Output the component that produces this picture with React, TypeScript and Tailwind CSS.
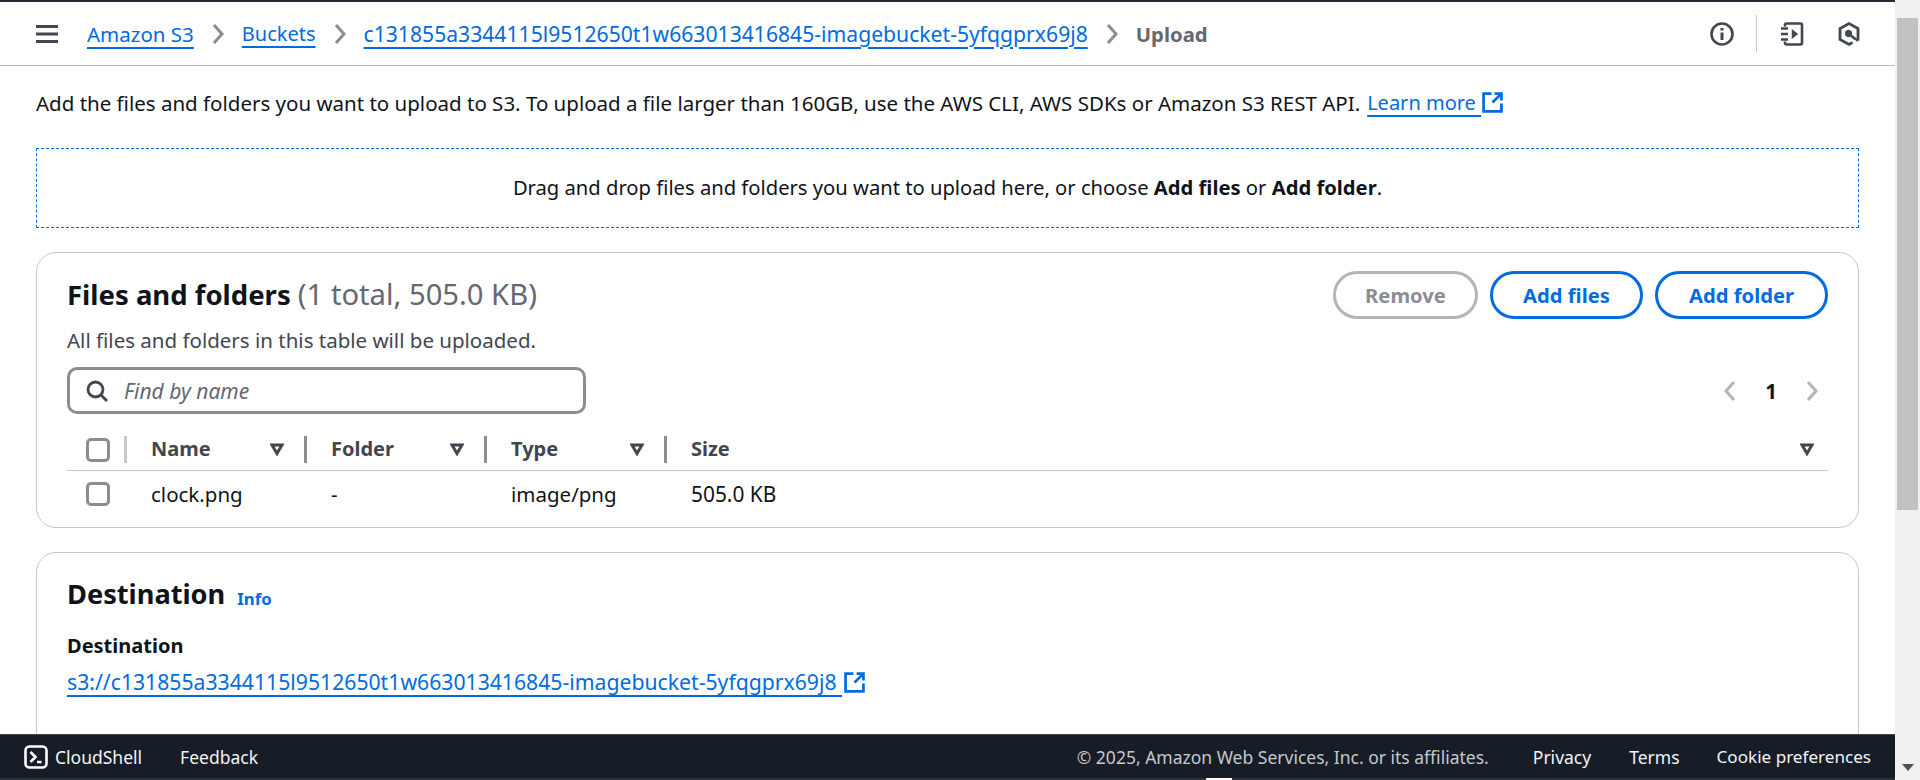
import React from "react";

const Ext = ({ className = "" }: { className?: string }) => (
  <svg viewBox="0 0 20 20" className={"w-[21px] h-[21px] " + className} fill="none" stroke="#006ce0" strokeWidth="2.6">
    <path d="M9 1.5H1.5v17h17V11" />
    <path d="M12 1.5h6.5V8M18 2l-8 8" />
  </svg>
);

const Chevron = ({ color = "#8c8c94", dir = "r" }: { color?: string; dir?: string }) => (
  <svg viewBox="0 0 12 20" className="w-[12px] h-[20px]" fill="none" stroke={color} strokeWidth="3">
    <path d={dir === "r" ? "M2 1l8 9-8 9" : "M10 1l-8 9 8 9"} />
  </svg>
);

const Caret = () => (
  <svg viewBox="0 0 14 13" className="w-[14px] h-[13px]" fill="none" stroke="#424650" strokeWidth="3">
    <path d="M2 2h10l-5 8.5z" />
  </svg>
);

const Check = () => <div className="w-[24px] h-[24px] rounded-[5px] border-[3px] border-[#8c8c94] bg-white" />;

const Crumb = ({ children, size }: { children: React.ReactNode; size: string }) => (
  <a className={"text-[#006ce0] underline underline-offset-[5px] decoration-2 whitespace-nowrap " + size}>{children}</a>
);

const Btn = ({ children, w, off }: { children: React.ReactNode; w: string; off?: boolean }) => (
  <div
    className={
      "h-[48px] rounded-full border-[3px] flex items-center justify-center font-bold text-[20.2px] " +
      w +
      (off ? " border-[#b4b4bb] text-[#8c8c94]" : " border-[#006ce0] text-[#006ce0]")
    }
  >
    {children}
  </div>
);

const Th = ({ label, w, last }: { label: string; w: string; last?: boolean }) => (
  <div className={"flex items-center h-[27px] font-bold text-[20px] text-[#424650] " + w}>
    <span className="pl-[24px] mb-[2px]">{label}</span>
    <span className={"ml-auto " + (last ? "mr-[14px]" : "mr-[20px]")}>
      <Caret />
    </span>
    {!last && <span className="w-[3px] h-[27px] bg-[#8c8c94]" />}
  </div>
);

export default function App() {
  return (
    <div className="h-[780px] w-[1920px] overflow-hidden flex bg-white text-[20.5px] leading-[24px] text-[#0f141a] font-['Noto_Sans',sans-serif]">
      <div className="w-[1895px] flex flex-col h-full">
        <div className="h-[2px] bg-[#232b37] shrink-0" />
        <header className="h-[64px] shrink-0 border-b border-[#b4b4bb] flex items-center pl-[36px] pr-[34px]">
          <svg viewBox="0 0 22 18" className="w-[22px] h-[18px] mr-[29px]" fill="#424650">
            <rect width="22" height="3" y="0" />
            <rect width="22" height="3" y="7.5" />
            <rect width="22" height="3" y="15" />
          </svg>
          <Crumb size="text-[20.5px]">Amazon S3</Crumb>
          <span className="mx-[18px] flex"><Chevron /></span>
          <Crumb size="text-[20px]">Buckets</Crumb>
          <span className="mx-[18px] flex"><Chevron /></span>
          <Crumb size="text-[21.15px]">c131855a3344115l9512650t1w663013416845-imagebucket-5yfqgprx69j8</Crumb>
          <span className="mx-[18px] flex"><Chevron /></span>
          <span className="font-bold text-[20.3px] text-[#656871]">Upload</span>
          <div className="ml-auto flex items-center">
            <svg viewBox="0 0 24 24" className="w-[24px] h-[24px]" fill="none" stroke="#424650" strokeWidth="2.6">
              <circle cx="12" cy="12" r="10.5" />
              <path d="M12 10.5V18M12 6v2.6" strokeWidth="3" />
            </svg>
            <span className="w-px h-[37px] bg-[#c6c6cd] ml-[22px] mr-[23px]" />
            <svg viewBox="0 0 24 24" className="w-[24px] h-[24px]" fill="none" stroke="#424650" strokeWidth="2.6">
              <path d="M5 4.5V3a1.5 1.5 0 0 1 1.5-1.5h14A1.5 1.5 0 0 1 22 3v18a1.5 1.5 0 0 1-1.5 1.5h-14A1.5 1.5 0 0 1 5 21v-1.5" />
              <path d="M1 6.5h7M1 12h7M1 17.5h7" />
              <path d="M12.5 8.5v7l4.5-3.5z" fill="#424650" strokeWidth="1.5" />
            </svg>
            <svg viewBox="0 0 24 24" className="w-[24px] h-[24px] ml-[33px]" fill="none" stroke="#424650" strokeWidth="2.8">
              <path d="M15.5 20.5L12 22.4 3 17.4V6.6l9-5 9 5v10.8l-2 1.1" />
              <circle cx="11.5" cy="11.5" r="3.2" fill="#424650" strokeWidth="1" />
              <path d="M12.5 12.5l6.5 5" />
            </svg>
          </div>
        </header>

        <main className="flex-1 min-h-0 overflow-hidden pl-[36px] pr-[36px]">
          <div className="h-[74px] flex items-center whitespace-nowrap">
            <span>Add the files and folders you want to upload to S3. To upload a file larger than 160GB, use the AWS CLI, AWS SDKs or Amazon S3 REST API.</span>
            <a className="ml-[7px] text-[20px] text-[#006ce0] underline underline-offset-[5px] decoration-2">Learn more&nbsp;</a>
            <Ext className="-mt-[1px] ml-[1px]" />
          </div>
          <div className="mt-[8px] h-[80px] pb-[2px] border border-dashed border-[#006ce0] flex items-center justify-center text-[20.2px]">
            <span>
              Drag and drop files and folders you want to upload here, or choose <b>Add files</b> or <b>Add folder</b>.
            </span>
          </div>

          <section className="mt-[24px] h-[276px] rounded-[20px] border border-[#c6c6cd] px-[30px] pt-[18px]">
            <div className="flex items-start justify-between h-[48px]">
              <div>
                <div className="text-[27.5px] font-bold leading-[34px] mt-[6px] whitespace-nowrap">
                  Files and folders <span className="font-normal text-[29.2px] text-[#656871]">(1 total, 505.0 KB)</span>
                </div>
                <div className="mt-[16px] text-[#424650] whitespace-nowrap">All files and folders in this table will be uploaded.</div>
              </div>
              <div className="flex gap-[12px]">
                <Btn w="w-[145px]" off>Remove</Btn>
                <Btn w="w-[153px]">Add files</Btn>
                <Btn w="w-[173px]">Add folder</Btn>
              </div>
            </div>
            <div className="mt-[48px] flex items-center justify-between">
              <div className="w-[519px] h-[47px] rounded-[10px] border-[3px] border-[#8c8c94] flex items-center pl-[16px]">
                <svg viewBox="0 0 22 22" className="w-[22px] h-[22px]" fill="none" stroke="#424650" strokeWidth="2.8">
                  <circle cx="9.5" cy="9.5" r="7.5" />
                  <path d="M15 15l6 6" />
                </svg>
                <span className="ml-[16px] italic text-[21px] text-[#656871]">Find by name</span>
              </div>
              <div className="flex items-center mr-[10px]">
                <Chevron color="#b4b4bb" dir="l" />
                <span className="mx-[29px] font-bold">1</span>
                <Chevron color="#b4b4bb" />
              </div>
            </div>
            <div className="mt-[22px] flex items-center h-[27px] border-b border-[#c6c6cd] pb-[7px] box-content">
              <div className="w-[57px] pl-[19px] flex items-center shrink-0 h-[27px]">
                <Check />
              </div>
              <span className="w-[3px] h-[27px] bg-[#c6c6cd] shrink-0" />
              <Th label="Name" w="w-[180px]" />
              <Th label="Folder" w="w-[180px]" />
              <Th label="Type" w="w-[180px]" />
              <Th label="Size" w="flex-1" last />
            </div>
            <div className="flex items-center h-[46px]">
              <div className="w-[60px] pl-[19px] shrink-0 flex"><Check /></div>
              <div className="w-[180px] pl-[24px]">clock.png</div>
              <div className="w-[180px] pl-[24px]">-</div>
              <div className="w-[180px] pl-[24px]">image/png</div>
              <div className="pl-[24px] text-[20.9px]">505.0 KB</div>
            </div>
          </section>

          <section className="mt-[24px] h-[300px] rounded-t-[20px] border border-[#c6c6cd] px-[30px] pt-[24px]">
            <div className="flex items-baseline">
              <span className="text-[27.2px] font-bold leading-[34px]">Destination</span>
              <span className="ml-[12px] text-[#006ce0] font-bold text-[16.8px] relative top-[1px]">Info</span>
            </div>
            <div className="mt-[23px] font-bold text-[20px]">Destination</div>
            <div className="mt-[12px] flex items-center">
              <a className="text-[#006ce0] text-[21.2px] underline underline-offset-[5px] decoration-2 whitespace-nowrap">s3://c131855a3344115l9512650t1w663013416845-imagebucket-5yfqgprx69j8&nbsp;</a>
              <Ext className="ml-[2px]" />
            </div>
          </section>
        </main>

        <footer className="h-[44px] shrink-0 bg-[#161d26] border-t border-[#424650] flex items-center pl-[24px] pr-[24px] text-[17.5px] text-[#f3f3f7]">
          <svg viewBox="0 0 24 24" className="w-[24px] h-[24px] mr-[7px]" fill="none" stroke="#ffffff" strokeWidth="2.6">
            <rect x="1.5" y="1.5" width="21" height="21" rx="4" />
            <path d="M6.5 7l5 5-5 5M13 17h4.5" />
          </svg>
          <span>CloudShell</span>
          <span className="ml-[38px]">Feedback</span>
          <span className="ml-auto text-[#c6c6cd]">© 2025, Amazon Web Services, Inc. or its affiliates.</span>
          <span className="ml-[44px]">Privacy</span>
          <span className="ml-[38px]">Terms</span>
          <span className="ml-[37px] text-[17.1px]">Cookie preferences</span>
        </footer>
        <div className="h-[2px] shrink-0 bg-[#2e3339] pl-[1206px]">
          <div className="w-[26px] h-full bg-white" />
        </div>
      </div>
      <div className="flex-1 h-full bg-[#f1f1f1] flex flex-col items-center pl-[2px] pr-[2px]">
        <div className="mt-[18px] w-[21px] h-[492px] bg-[#c1c1c1] shrink-0" />
        <svg viewBox="0 0 12 7" className="w-[12px] h-[7px] mt-auto mb-[9px]" fill="#505050"><path d="M6 7L0 0h12z" /></svg>
      </div>
    </div>
  );
}
